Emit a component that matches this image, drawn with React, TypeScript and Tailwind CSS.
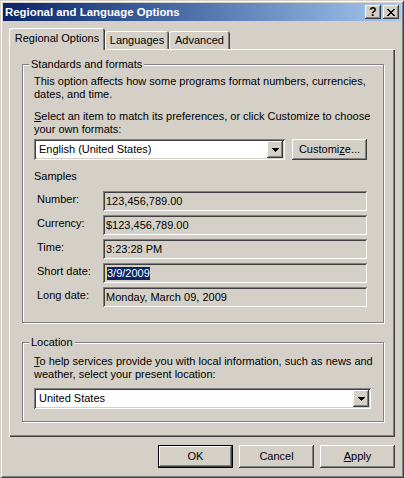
const raised =
  "shadow-[inset_-1px_-1px_#404040,inset_1px_1px_#ffffff,inset_-2px_-2px_#808080,inset_2px_2px_#d4d0c8]";
const sunken =
  "shadow-[inset_1px_1px_#808080,inset_-1px_-1px_#ffffff,inset_2px_2px_#404040,inset_-2px_-2px_#d4d0c8]";
const etched = "border border-[#808080] shadow-[inset_1px_1px_#ffffff,1px_1px_#ffffff]";

const samples = [
  { label: "Number:", value: "123,456,789.00" },
  { label: "Currency:", value: "$123,456,789.00" },
  { label: "Time:", value: "3:23:28 PM" },
  { label: "Short date:", value: "3/9/2009", selected: true },
  { label: "Long date:", value: "Monday, March 09, 2009" },
];

function Arrow() {
  return (
    <svg width="7" height="4" viewBox="0 0 7 4" shapeRendering="crispEdges">
      <rect x="0" y="0" width="7" height="1" fill="#000" />
      <rect x="1" y="1" width="5" height="1" fill="#000" />
      <rect x="2" y="2" width="3" height="1" fill="#000" />
      <rect x="3" y="3" width="1" height="1" fill="#000" />
    </svg>
  );
}

function Combo({ value, width }: { value: string; width: string }) {
  return (
    <div className={`flex h-[21px] items-center bg-white ${width} ${sunken}`}>
      <span className="pl-[5px] whitespace-nowrap">{value}</span>
      <div
        className={`ml-auto mr-[2px] flex h-[17px] w-[16px] items-center justify-center bg-[#d4d0c8] ${raised}`}
      >
        <Arrow />
      </div>
    </div>
  );
}

function Button({ children, isDefault }: { children: React.ReactNode; isDefault?: boolean }) {
  return (
    <div
      className={`flex h-[23px] w-[75px] items-center justify-center bg-[#d4d0c8] ${
        isDefault ? "border border-black" : ""
      } ${raised}`}
    >
      {children}
    </div>
  );
}

function GroupBox({
  title,
  className,
  children,
}: {
  title: string;
  className?: string;
  children: React.ReactNode;
}) {
  return (
    <div className={`relative w-[362px] ${etched} ${className ?? ""}`}>
      <span className="absolute -top-[7px] left-[6px] bg-[#d4d0c8] px-[2px] leading-[13px]">
        {title}
      </span>
      {children}
    </div>
  );
}

export default function App() {
  return (
    <div
      className={`flex h-[478px] w-[404px] flex-col bg-[#d4d0c8] p-[3px] font-['Liberation_Sans',Arial,sans-serif] text-[11px] leading-[13px] text-black shadow-[inset_1px_1px_#d4d0c8,inset_-1px_-1px_#404040,inset_2px_2px_#ffffff,inset_-2px_-2px_#808080]`}
    >
      {/* title bar */}
      <div className="flex h-[18px] items-center bg-linear-to-r from-[#0a246a] to-[#a6caf0] pl-[2px] pr-[2px]">
        <span className="text-[11.4px] font-bold text-white whitespace-nowrap">
          Regional and Language Options
        </span>
        <div className="ml-auto flex gap-[2px]">
          <div
            className={`flex h-[14px] w-[16px] items-center justify-center bg-[#d4d0c8] text-[12px] font-bold leading-none ${raised}`}
          >
            ?
          </div>
          <div className={`flex h-[14px] w-[16px] items-center justify-center bg-[#d4d0c8] ${raised}`}>
            <svg width="8" height="7" viewBox="0 0 8 7" shapeRendering="crispEdges">
              <path d="M0 0h2l2 2.5L6 0h2L5 3.5L8 7H6L4 4.5L2 7H0l3-3.5z" fill="#000" />
            </svg>
          </div>
        </div>
      </div>

      {/* tabs + panel */}
      <div className="mx-[6px] mt-[7px] flex flex-col">
        <div className="flex h-[21px] items-end">
          <div className="relative z-10 -mb-px flex h-[22px] w-[96px] items-start justify-center rounded-t-[3px] bg-[#d4d0c8] pt-[4px] shadow-[inset_1px_1px_#ffffff,inset_-1px_0_#404040,inset_-2px_0_#808080]">
            Regional Options
          </div>
          <div className="flex h-[18px] w-[64px] items-start justify-center rounded-t-[3px] pt-[3px] shadow-[inset_1px_1px_#ffffff,inset_-1px_0_#404040,inset_-2px_0_#808080]">
            Languages
          </div>
          <div className="flex h-[18px] w-[61px] items-start justify-center rounded-t-[3px] pt-[3px] shadow-[inset_1px_1px_#ffffff,inset_-1px_0_#404040,inset_-2px_0_#808080]">
            Advanced
          </div>
        </div>

        <div className="flex h-[388px] flex-col pl-[13px] pt-[15px] shadow-[inset_1px_1px_#ffffff,inset_-1px_-1px_#404040,inset_-2px_-2px_#808080]">
          <GroupBox title="Standards and formats" className="pl-[11px] pt-[10px] pb-[15px]">
            <p className="whitespace-nowrap">
              This option affects how some programs format numbers, currencies,
              <br />
              dates, and time.
            </p>
            <p className="mt-[9px] whitespace-nowrap">
              <u>S</u>elect an item to match its preferences, or click Customize to choose
              <br />
              your own formats:
            </p>
            <div className="mt-[3px] flex gap-[7px]">
              <Combo value="English (United States)" width="w-[251px]" />
              <div
                className={`flex h-[21px] w-[75px] items-center justify-center bg-[#d4d0c8] ${raised}`}
              >
                <span>
                  Customi<u>z</u>e...
                </span>
              </div>
            </div>
            <p className="mt-[10px]">Samples</p>
            <div className="mt-[8px] flex flex-col gap-[4px] pl-[3px]">
              {samples.map((s) => (
                <div key={s.label} className="flex items-start">
                  <span className="w-[66px] pt-[2px] whitespace-nowrap">{s.label}</span>
                  <div className={`flex h-[20px] w-[264px] items-center pl-[3px] ${sunken}`}>
                    {s.selected ? (
                      <span className="border-l border-[#e8d070] bg-[#0a246a] text-white">
                        {s.value}
                      </span>
                    ) : (
                      <span className="whitespace-nowrap">{s.value}</span>
                    )}
                  </div>
                </div>
              ))}
            </div>
          </GroupBox>

          <GroupBox title="Location" className="mt-[19px] pl-[11px] pt-[12px] pb-[12px]">
            <p className="whitespace-nowrap">
              <u>T</u>o help services provide you with local information, such as news and
              <br />
              weather, select your present location:
            </p>
            <div className="mt-[7px]">
              <Combo value="United States" width="w-[337px]" />
            </div>
          </GroupBox>
        </div>
      </div>

      {/* buttons */}
      <div className="mr-[6px] mt-[8px] flex justify-end gap-[6px]">
        <Button isDefault>OK</Button>
        <Button>Cancel</Button>
        <Button>
          <span>
            <u>A</u>pply
          </span>
        </Button>
      </div>
    </div>
  );
}
